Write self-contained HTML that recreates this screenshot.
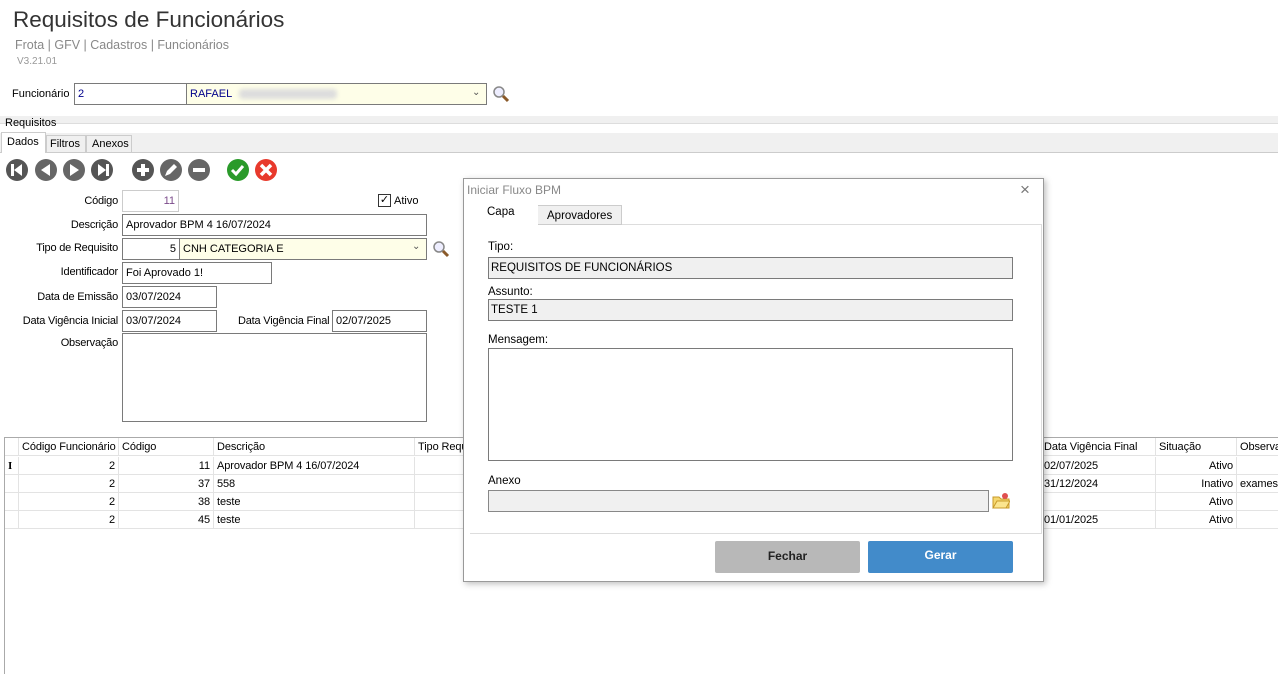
<!DOCTYPE html>
<html><head><meta charset="utf-8"><style>
*{box-sizing:border-box;margin:0;padding:0}
body{width:1278px;height:674px;overflow:hidden;background:#fff;font-family:"Liberation Sans",sans-serif;font-size:11px;color:#000;position:relative}
.a{position:absolute}
.in{position:absolute;border:1px solid #7a7a7a;background:#fff;height:22px;padding:4px 3px;white-space:nowrap;overflow:hidden}
.lb{position:absolute;text-align:right;width:118px;left:0;letter-spacing:-0.2px}
.cell{position:absolute;height:18px;line-height:18px;padding:0 3px;border-right:1px solid #e3e3e3;border-bottom:1px solid #e3e3e3;white-space:nowrap;overflow:hidden;letter-spacing:-0.1px}
.r{text-align:right}
.dl{position:absolute;font-size:11.5px}
.df{position:absolute;left:488px;width:525px;height:22px;border:1px solid #7a7a7a;background:#f0f0f0;padding:4px 2px;font-size:11.5px}
</style></head><body>
<div class="a" style="left:13px;top:7px;font-size:22.5px;color:#333">Requisitos de Funcionários</div>
<div class="a" style="left:15px;top:38px;font-size:12.5px;color:#888">Frota | GFV | Cadastros | Funcionários</div>
<div class="a" style="left:17px;top:56px;font-size:10px;color:#999">V3.21.01</div>
<div class="a" style="left:12px;top:88px">Funcionário</div>
<div class="in" style="left:74px;top:83px;width:113px;color:#00008b">2</div>
<div class="in" style="left:186px;top:83px;width:301px;background:#fefee8;color:#00008b">RAFAEL <span style="display:inline-block;width:98px;height:10px;background:#ddd;border-radius:4px;filter:blur(2px);vertical-align:middle;margin-left:4px"></span></div>
<div class="a" style="left:472px;top:87px;color:#555;font-size:10px">&#8964;</div>
<svg class="a" style="left:492px;top:85px" width="18" height="18"><circle cx="7" cy="7" r="5" fill="#eef" stroke="#888" stroke-width="1.5"/><line x1="11" y1="11" x2="16" y2="16" stroke="#8a5a2a" stroke-width="3"/></svg>
<div class="a" style="left:0;top:116px;width:1278px;height:8px;background:#f0f0f0;border-bottom:1px solid #ddd"></div>
<div class="a" style="left:5px;top:117px;font-size:11px">Requisitos</div>
<div class="a" style="left:0;top:133px;width:1278px;height:20px;background:#f0f0f0;border-bottom:1px solid #ccc"></div>
<div class="a" style="left:1px;top:132px;width:45px;height:21px;background:#fff;border:1px solid #ccc;border-bottom:none;padding:3px 5px">Dados</div>
<div class="a" style="left:46px;top:135px;width:40px;height:18px;border:1px solid #ccc;padding:2px 3px">Filtros</div>
<div class="a" style="left:86px;top:135px;width:46px;height:18px;border:1px solid #ccc;padding:2px 5px">Anexos</div>
<svg class="a" style="left:0;top:155px" width="290" height="30">
<g fill="#555"><circle cx="17" cy="15" r="11"/><circle cx="46" cy="15" r="11" fill="#666"/><circle cx="74" cy="15" r="11" fill="#666"/><circle cx="102" cy="15" r="11"/><circle cx="143" cy="15" r="11"/><circle cx="171" cy="15" r="11" fill="#666"/><circle cx="199" cy="15" r="11" fill="#666"/></g>
<circle cx="238" cy="15" r="11" fill="#2a9a2a"/><circle cx="266" cy="15" r="11" fill="#e8392c"/>
<g fill="#fff"><rect x="11" y="9" width="3" height="12"/><path d="M22 9v12l-8-6z"/><path d="M50 9v12l-9-6z"/><path d="M70 9v12l9-6z"/><path d="M98 9v12l8-6z"/><rect x="106" y="9" width="3" height="12"/><rect x="137" y="13" width="12" height="4"/><rect x="141" y="9" width="4" height="12"/><rect x="193" y="13" width="12" height="4"/></g>
<path d="M165 21l2-5 7-7 3 3-7 7z" fill="#fff"/>
<path d="M232 15l4 4 7-8" stroke="#fff" stroke-width="3" fill="none"/>
<path d="M261 10l10 10M271 10l-10 10" stroke="#fff" stroke-width="3.5"/>
</svg>
<div class="lb" style="top:195px">Código</div><div class="in" style="left:122px;top:190px;width:57px;text-align:right;color:#7a4a8a;border-color:#ccc">11</div>
<div class="a" style="left:378px;top:194px;width:13px;height:13px;border:1px solid #333;font-size:11px;line-height:11px;text-align:center">✓</div><div class="a" style="left:394px;top:195px">Ativo</div>
<div class="lb" style="top:219px">Descrição</div><div class="in" style="left:122px;top:214px;width:305px">Aprovador BPM 4 16/07/2024</div>
<div class="lb" style="top:242px">Tipo de Requisito</div><div class="in" style="left:122px;top:238px;width:58px;text-align:right">5</div><div class="in" style="left:179px;top:238px;width:248px;background:#fefee8">CNH CATEGORIA E</div>
<div class="a" style="left:412px;top:241px;color:#555;font-size:10px">&#8964;</div>
<svg class="a" style="left:432px;top:240px" width="18" height="18"><circle cx="7" cy="7" r="5" fill="#eef" stroke="#888" stroke-width="1.5"/><line x1="11" y1="11" x2="16" y2="16" stroke="#8a5a2a" stroke-width="3"/></svg>
<div class="lb" style="top:266px">Identificador</div><div class="in" style="left:122px;top:262px;width:150px">Foi Aprovado 1!</div>
<div class="lb" style="top:291px">Data de Emissão</div><div class="in" style="left:122px;top:286px;width:95px">03/07/2024</div>
<div class="lb" style="top:315px">Data Vigência Inicial</div><div class="in" style="left:122px;top:310px;width:95px">03/07/2024</div>
<div class="a" style="left:238px;top:315px;letter-spacing:-0.2px">Data Vigência Final</div><div class="in" style="left:332px;top:310px;width:95px">02/07/2025</div>
<div class="lb" style="top:337px">Observação</div><div class="in" style="left:122px;top:333px;width:305px;height:89px"></div>
<div class="a" style="left:4px;top:437px;width:1274px;height:237px;border-left:1px solid #aaa;border-top:1px solid #aaa"></div>
<div class="a" style="left:5px;top:438px">
<div class="cell" style="left:0;top:0;width:14px"></div><div class="cell" style="left:14px;top:0;width:100px">Código Funcionário</div><div class="cell" style="left:114px;top:0;width:95px">Código</div><div class="cell" style="left:209px;top:0;width:201px">Descrição</div><div class="cell" style="left:410px;top:0;width:100px">Tipo Requ</div>
<div class="cell" style="left:1036px;top:0;width:115px">Data Vigência Final</div><div class="cell" style="left:1151px;top:0;width:81px">Situação</div><div class="cell" style="left:1232px;top:0;width:50px">Observa</div>
<div class="cell" style="left:0;top:19px;width:14px;font-family:'Liberation Serif',serif;font-weight:bold">I</div><div class="cell r" style="left:14px;top:19px;width:100px">2</div><div class="cell r" style="left:114px;top:19px;width:95px">11</div><div class="cell" style="left:209px;top:19px;width:201px">Aprovador BPM 4 16/07/2024</div><div class="cell" style="left:410px;top:19px;width:100px"></div><div class="cell" style="left:1036px;top:19px;width:115px">02/07/2025</div><div class="cell r" style="left:1151px;top:19px;width:81px">Ativo</div><div class="cell" style="left:1232px;top:19px;width:50px"></div>
<div class="cell" style="left:0;top:37px;width:14px"></div><div class="cell r" style="left:14px;top:37px;width:100px">2</div><div class="cell r" style="left:114px;top:37px;width:95px">37</div><div class="cell" style="left:209px;top:37px;width:201px">558</div><div class="cell" style="left:410px;top:37px;width:100px"></div><div class="cell" style="left:1036px;top:37px;width:115px">31/12/2024</div><div class="cell r" style="left:1151px;top:37px;width:81px">Inativo</div><div class="cell" style="left:1232px;top:37px;width:50px">exames</div>
<div class="cell" style="left:0;top:55px;width:14px"></div><div class="cell r" style="left:14px;top:55px;width:100px">2</div><div class="cell r" style="left:114px;top:55px;width:95px">38</div><div class="cell" style="left:209px;top:55px;width:201px">teste</div><div class="cell" style="left:410px;top:55px;width:100px"></div><div class="cell" style="left:1036px;top:55px;width:115px"></div><div class="cell r" style="left:1151px;top:55px;width:81px">Ativo</div><div class="cell" style="left:1232px;top:55px;width:50px"></div>
<div class="cell" style="left:0;top:73px;width:14px"></div><div class="cell r" style="left:14px;top:73px;width:100px">2</div><div class="cell r" style="left:114px;top:73px;width:95px">45</div><div class="cell" style="left:209px;top:73px;width:201px">teste</div><div class="cell" style="left:410px;top:73px;width:100px"></div><div class="cell" style="left:1036px;top:73px;width:115px">01/01/2025</div><div class="cell r" style="left:1151px;top:73px;width:81px">Ativo</div><div class="cell" style="left:1232px;top:73px;width:50px"></div>
</div>
<!-- dialog -->
<div class="a" style="left:463px;top:178px;width:581px;height:404px;background:#fff;border:1px solid #999;box-shadow:2px 2px 6px rgba(0,0,0,.25)"></div>
<div class="a" style="left:467px;top:183px;color:#888;font-size:12px">Iniciar Fluxo BPM</div>
<div class="a" style="left:1020px;top:180px;color:#777;font-size:17px">×</div>
<div class="a" style="left:470px;top:224px;width:572px;height:310px;border:1px solid #ddd;border-left:none"></div>
<div class="a" style="left:537px;top:205px;width:85px;height:20px;background:#f0f0f0;border:1px solid #ccc;padding:4px 9px;font-size:11.5px">Aprovadores</div>
<div class="a" style="left:470px;top:202px;width:68px;height:23px;background:#fff;padding:4px 17px;font-size:11.5px">Capa</div>
<div class="dl" style="left:488px;top:241px">Tipo:</div>
<div class="df" style="top:257px">REQUISITOS DE FUNCIONÁRIOS</div>
<div class="dl" style="left:488px;top:286px">Assunto:</div>
<div class="df" style="top:299px">TESTE 1</div>
<div class="dl" style="left:488px;top:334px">Mensagem:</div>
<div class="df" style="top:348px;height:113px;background:#fff"></div>
<div class="dl" style="left:488px;top:475px">Anexo</div>
<div class="df" style="top:490px;width:501px;border-color:#888"></div>
<svg class="a" style="left:992px;top:492px" width="18" height="17"><path d="M1 5h6l2 2h8v9H1z" fill="#f5d76e" stroke="#c89a2a"/><path d="M1 16l4-7h13l-4 7z" fill="#fbe58f" stroke="#c89a2a"/><circle cx="13" cy="4" r="3" fill="#e05050"/></svg>
<div class="a" style="left:715px;top:541px;width:145px;height:32px;background:#b8b8b8;border-radius:2px;text-align:center;line-height:31px;font-weight:bold;color:#222;font-size:12px">Fechar</div>
<div class="a" style="left:868px;top:541px;width:145px;height:32px;background:#428bca;border-radius:2px;text-align:center;line-height:29px;font-weight:bold;color:#fff;font-size:12px">Gerar</div>
</body></html>
